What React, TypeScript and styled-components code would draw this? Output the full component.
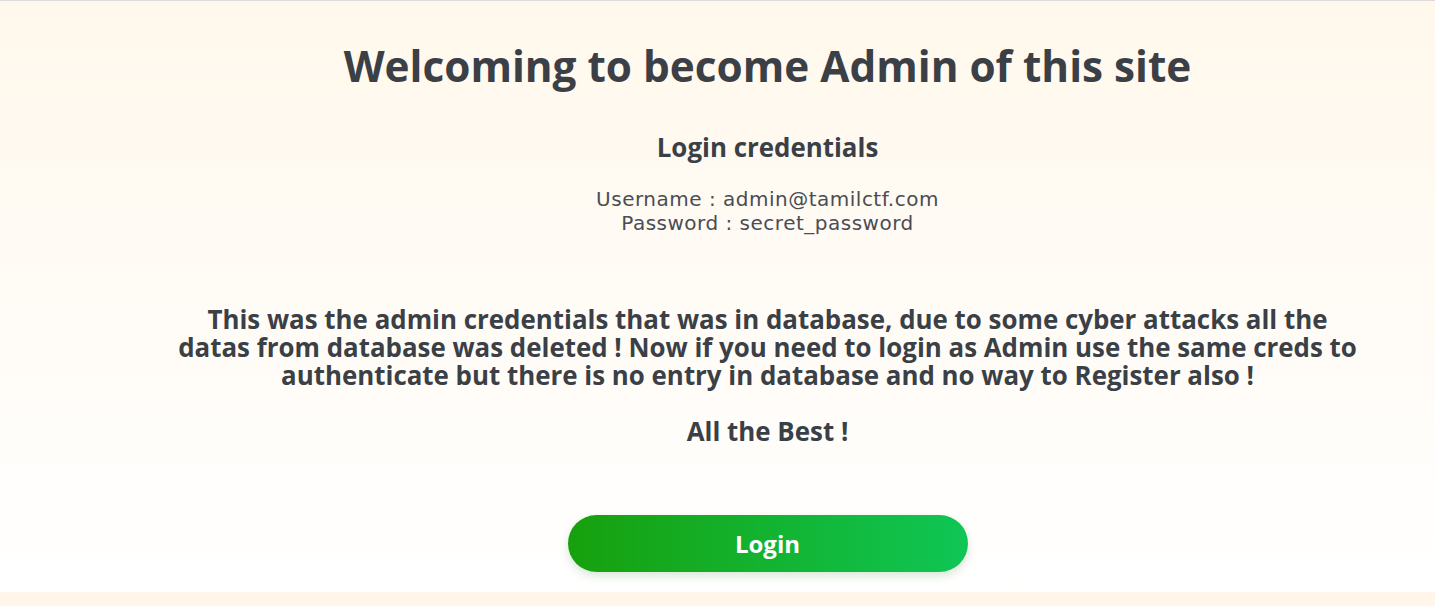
import React from "react";
import styled, { createGlobalStyle } from "styled-components";

const GlobalStyle = createGlobalStyle`
  html, body {
    margin: 0;
    padding: 0;
    background: #fff6e9;
  }
  body {
    font-family: "Open Sans", "Noto Sans", sans-serif;
    color: #3b3f46;
  }
  * { box-sizing: border-box; }
`;

const Page = styled.div`
  border-top: 1px solid #dcdcdc;
`;

const Hero = styled.section`
  display: flex;
  flex-direction: column;
  align-items: center;
  padding: 40px 0 20px 100px;
  background: linear-gradient(180deg, #fff8ec 0%, #ffffff 100%);
  text-align: center;
`;

const Title = styled.h1`
  margin: 0;
  font-size: 42.3px;
  line-height: 50px;
  font-weight: 700;
  color: #3b3f46;
`;

const Subtitle = styled.h3`
  margin: 40px 0 0;
  font-size: 25.9px;
  line-height: 32px;
  font-weight: 700;
  color: #3b3f46;
`;

const Credentials = styled.p`
  margin: 24px 0 0;
  font-family: "DejaVu Sans", "Open Sans", sans-serif;
  font-size: 20px;
  line-height: 24.2px;
  font-weight: 400;
  letter-spacing: 0.5px;
  color: #4a4d53;
`;

const Notice = styled.p`
  margin: 71px 0 0;
  max-width: 1190px;
  font-size: 25.9px;
  line-height: 27.9px;
  font-weight: 700;
  color: #3b3f46;
`;

const LoginButton = styled.button`
  margin-top: 69.5px;
  width: 400px;
  height: 57px;
  border: none;
  border-radius: 29px;
  background: linear-gradient(90deg, #17a00d 0%, #0fc655 100%);
  box-shadow: 0 4px 10px rgba(40, 120, 40, 0.18);
  color: #ffffff;
  font-family: "Open Sans", "Noto Sans", sans-serif;
  font-size: 24px;
  font-weight: 700;
  display: flex;
  align-items: center;
  justify-content: center;
  cursor: pointer;
`;

export default function App() {
  return (
    <>
      <GlobalStyle />
      <Page>
        <Hero>
          <Title>Welcoming to become Admin of this site</Title>
          <Subtitle>Login credentials</Subtitle>
          <Credentials>
            Username : admin@tamilctf.com
            <br />
            Password : secret_password
          </Credentials>
          <Notice>
            This was the admin credentials that was in database, due to some cyber attacks all the
            datas from database was deleted ! Now if you need to login as Admin use the same creds to
            authenticate but there is no entry in database and no way to Register also !
            <br />
            <br />
            All the Best !
          </Notice>
          <LoginButton type="button">Login</LoginButton>
        </Hero>
      </Page>
    </>
  );
}
